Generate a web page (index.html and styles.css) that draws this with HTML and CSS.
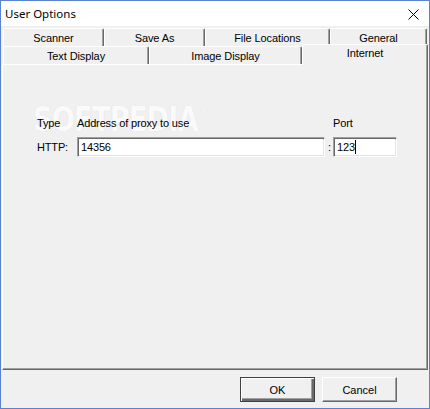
FILE: index.html
```html
<!DOCTYPE html>
<html lang="en">
<head>
    <meta charset="UTF-8">
    <title>User Options</title>
    <link rel="stylesheet" href="styles.css">
</head>
<body>
    <div class="window">
        <!-- Title Bar -->
        <div class="titlebar">
            <span class="title">User Options</span>
            <svg class="close" width="11" height="11" viewBox="0 0 11 11">
                <path d="M0.5 0.5 L10.5 10.5 M10.5 0.5 L0.5 10.5" stroke="#000" stroke-width="1"/>
            </svg>
        </div>

        <!-- Tabs -->
        <div class="tabs">
            <div class="tab-row">
                <div class="tab w-scanner">Scanner</div>
                <div class="tab w-saveas">Save As</div>
                <div class="tab w-files">File Locations</div>
                <div class="tab w-general">General</div>
            </div>
            <div class="tab-row">
                <div class="tab w-text">Text Display</div>
                <div class="tab w-image">Image Display</div>
                <div class="tab w-internet selected">Internet</div>
            </div>
        </div>

        <!-- Internet Page -->
        <div class="panel">
            <div class="watermark">SOFTPEDIA<sup>&reg;</sup></div>
            <div class="proxy-grid">
                <span class="label">Type</span>
                <span class="label">Address of proxy to use</span>
                <span></span>
                <span class="label">Port</span>

                <span class="label">HTTP:</span>
                <div class="field">14356</div>
                <span class="colon">:</span>
                <div class="field">123<span class="caret"></span></div>
            </div>
        </div>

        <!-- Dialog Buttons -->
        <div class="actions">
            <button class="btn default">OK</button>
            <button class="btn">Cancel</button>
        </div>
    </div>
</body>
</html>
```

FILE: styles.css
```css
/* General Styles */
body {
    margin: 0;
    font-family: "Liberation Sans", Arial, sans-serif;
    font-size: 11px;
    color: #000;
}

.window {
    width: 430px;
    height: 409px;
    box-sizing: border-box;
    border: 1px solid #5a83cc;
    background: #f0f0f0;
    display: flex;
    flex-direction: column;
}

/* Title Bar */
.titlebar {
    height: 25px;
    background: #fff;
    display: flex;
    align-items: center;
    justify-content: space-between;
    padding: 0 10px 0 4px;
    flex-shrink: 0;
}

.title {
    font-family: "Noto Sans", "Liberation Sans", sans-serif;
    font-size: 11.5px;
    color: #000;
}

.close {
    display: block;
    margin-top: 1px;
}

/* Tabs */
.tabs {
    padding: 2px 0 0 2px;
}

.tab-row {
    display: flex;
    height: 18px;
}

.tab {
    box-sizing: border-box;
    height: 18px;
    border-top: 1px solid #fff;
    border-left: 1px solid #fff;
    border-right: 1px solid #696969;
    box-shadow: inset -1px 0 #a0a0a0;
    border-radius: 2px 2px 0 0;
    text-align: center;
    line-height: 19px;
    letter-spacing: -0.1px;
    background: #f0f0f0;
}

.w-scanner { width: 101px; }
.w-saveas { width: 101px; }
.w-files { width: 125px; }
.w-general { width: 97px; }
.w-text { width: 146px; }
.w-image { width: 153px; }
.w-internet { width: 126px; }

.tab.selected {
    height: 21px;
    margin-top: -2px;
    line-height: 17px;
    position: relative;
    z-index: 1;
}

/* Page Panel */
.panel {
    position: relative;
    box-sizing: border-box;
    height: 306px;
    margin: 0 1px;
    border-top: 1px solid #fff;
    border-left: 1px solid #fff;
    border-right: 1px solid #696969;
    border-bottom: 1px solid #696969;
    box-shadow: inset -1px -1px #a0a0a0;
    padding: 52px 0 0 34px;
}

/* Faint watermark over the page */
.watermark {
    position: absolute;
    left: 30px;
    top: 41px;
    font-family: "DejaVu Sans", sans-serif;
    font-weight: bold;
    font-size: 34px;
    line-height: 26px;
    letter-spacing: -1px;
    color: #fafafa;
    text-shadow: 0 0 1px #d9d9d9;
    transform: scaleX(0.8);
    transform-origin: left top;
}

.watermark sup {
    font-size: 10px;
    line-height: 10px;
    vertical-align: top;
    margin-left: 3px;
}

.proxy-grid {
    position: relative;
    display: grid;
    grid-template-columns: 40px 248px 8px 64px;
    grid-template-rows: 13px 20px;
    row-gap: 7px;
    align-items: center;
    letter-spacing: -0.15px;
}

.label {
    line-height: 13px;
}

.colon {
    padding-left: 3px;
}

.field {
    box-sizing: border-box;
    height: 20px;
    background: #fff;
    border-top: 1px solid #a0a0a0;
    border-left: 1px solid #a0a0a0;
    border-right: 1px solid #fff;
    border-bottom: 1px solid #fff;
    box-shadow: inset 1px 1px #696969, inset -1px -1px #e3e3e3;
    padding: 0 3px;
    line-height: 18px;
    display: flex;
    align-items: center;
}

.caret {
    display: inline-block;
    width: 1px;
    height: 14px;
    background: #000;
}

/* Dialog Buttons */
.actions {
    display: flex;
    justify-content: flex-end;
    gap: 7px;
    padding: 7px 32px 0 0;
}

.btn {
    box-sizing: border-box;
    width: 75px;
    height: 25px;
    padding: 0;
    font-family: "Liberation Sans", Arial, sans-serif;
    font-size: 11px;
    color: #000;
    background: #f0f0f0;
    border-top: 1px solid #fff;
    border-left: 1px solid #fff;
    border-right: 1px solid #696969;
    border-bottom: 1px solid #696969;
    box-shadow: inset -1px -1px #a0a0a0;
}

.btn.default {
    border: 1px solid #404040;
    box-shadow: inset 1px 1px #fff, inset -2px -2px #696969, inset -3px -3px #a0a0a0;
}
```
